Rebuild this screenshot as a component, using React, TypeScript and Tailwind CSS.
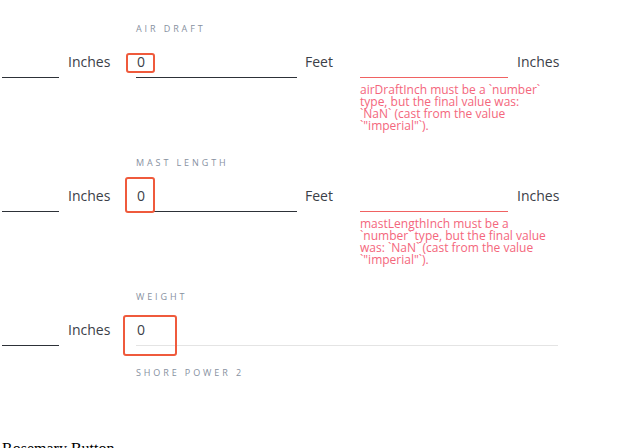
import React from "react"

type Box = { left: number; top: number; w: number; h: number }

function Label({ text }: { text: string }) {
  return (
    <div className="ml-[136px] h-[12px] text-[9px] leading-[12px] tracking-[2.9px] uppercase text-[#87919f]">
      {text}
    </div>
  )
}

function Highlight({ box }: { box: Box }) {
  return (
    <div
      className="absolute rounded-[3px] border-2 border-[#ef5a3c] pointer-events-none"
      style={{ left: box.left, top: box.top, width: box.w, height: box.h }}
    />
  )
}

function Section({
  label,
  box,
  error,
  errorLines,
}: {
  label: string
  box: Box
  error?: boolean
  errorLines?: string[]
}) {
  return (
    <div>
      <Label text={label} />
      <div className="mt-[17px] flex items-start">
        <div className="ml-[2px] w-[57px] h-[26px] border-b border-[#2d3138]" />
        <div className="ml-[9px] w-[68px] text-[14px] leading-[20px] text-[#3b4048]">Inches</div>
        {error ? (
          <>
            <div className="relative w-[161px] h-[26px] border-b border-[#2d3138] pl-[1px] text-[14px] leading-[20px] text-[#3b4048]">
              0
              <Highlight box={box} />
            </div>
            <div className="ml-[8px] w-[55px] text-[14px] leading-[20px] text-[#3b4048]">Feet</div>
            <div className="w-[148px] shrink-0">
              <div className="h-[26px] border-b border-[#f06262]" />
              <div className="mt-[6px] w-[196px] text-[12px] leading-[12px] text-[#f4667c]">
                {errorLines?.map((l) => (
                  <div key={l} className="whitespace-nowrap">{l}</div>
                ))}
              </div>
            </div>
            <div className="ml-[9px] text-[14px] leading-[20px] text-[#3b4048]">Inches</div>
          </>
        ) : (
          <div className="relative w-[422px] h-[26px] border-b border-[#e4e4e4] pl-[1px] text-[14px] leading-[20px] text-[#3b4048]">
            0
            <Highlight box={box} />
          </div>
        )}
      </div>
    </div>
  )
}

export default function App() {
  return (
    <div className="w-[636px] h-[448px] overflow-hidden bg-white font-['Open_Sans',sans-serif]">
      <div className="pt-[23px]">
        <Section
          label="Air Draft"
          box={{ left: -10, top: 1, w: 29, h: 20 }}
          error
          errorLines={[
            "airDraftInch must be a `number`",
            "type, but the final value was:",
            "`NaN` (cast from the value",
            "`\"imperial\"`).",
          ]}
        />
        <div className="h-[25px]" />
        <Section
          label="Mast Length"
          box={{ left: -11, top: -9, w: 30, h: 36 }}
          error
          errorLines={[
            "mastLengthInch must be a",
            "`number` type, but the final value",
            "was: `NaN` (cast from the value",
            "`\"imperial\"`).",
          ]}
        />
        <div className="h-[25px]" />
        <Section label="Weight" box={{ left: -13, top: -5, w: 54, h: 41 }} />
        <div className="h-[21px]" />
        <Label text="Shore Power 2" />
        <div className="mt-[58px] ml-[2px] font-['Liberation_Serif',serif] text-[16px] text-black">
          Rosemary Button
        </div>
      </div>
    </div>
  )
}
